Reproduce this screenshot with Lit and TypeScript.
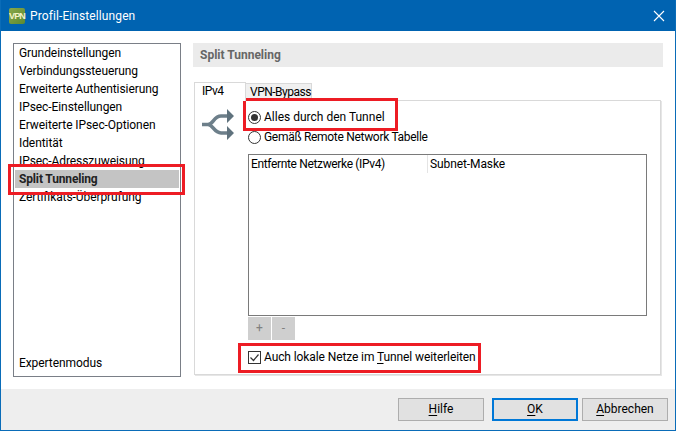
import { LitElement, html, css } from "lit";
import { customElement } from "lit/decorators.js";

const items = ["Grundeinstellungen","Verbindungssteuerung","Erweiterte Authentisierung","IPsec-Einstellungen","Erweiterte IPsec-Optionen","Identität","IPsec-Adresszuweisung","Split Tunneling","Zertifikats-Überprüfung"];

@customElement("app-root")
export class AppRoot extends LitElement {
  static styles = css`
    :host { display: block; width: 676px; height: 431px; }
    * { box-sizing: border-box; }
    .win { position: relative; width: 676px; height: 431px; display: flex; flex-direction: column; background: #fff; border: 1px solid #0a6cb8; border-top: 0; font: 12px Roboto, sans-serif; color: #000; overflow: hidden; }
    .title { height: 31px; background: #0063b1; color: #fff; display: flex; align-items: center; padding: 0 0 0 8px; font-size: 12px; letter-spacing: .1px; gap: 5px; }
    .logo { width: 16px; height: 16px; border-radius: 2px; background: linear-gradient(135deg, #8aa84a, #5c8a30); color: #f4f4c8; font: bold 9px "Liberation Sans", sans-serif; display: flex; align-items: center; justify-content: center; letter-spacing: -0.8px; }
    .title span { flex: 1; }
    .close { margin-right: 10px; display: block; }
    .main { flex: 1; display: flex; padding: 12px; gap: 12px; min-height: 0; }
    .side { width: 168px; border: 1px solid #7a7f87; padding: 0 1px 4px; display: flex; flex-direction: column; letter-spacing: -.08px; }
    .it { height: 18px; line-height: 19px; padding-left: 4px; white-space: nowrap; }
    .it.sel { background: #c4c4c4; font-weight: 700; color: #222; letter-spacing: -.15px; }
    .exp { margin-top: auto; }
    .right { flex: 1; min-width: 0; display: flex; flex-direction: column; }
    .hdr { height: 24px; line-height: 24px; background: #ebebeb; padding-left: 7px; font-weight: 700; color: #666; }
    .tabs { display: flex; margin: 14px 0 0 1px; align-items: flex-end; height: 19px; letter-spacing: -.5px; }
    .tab { border: 1px solid #d9d9d9; height: 19px; width: 52px; padding-left: 7px; line-height: 16px; background: #fff; border-bottom: 0; position: relative; z-index: 1; margin-bottom: -1px; white-space: nowrap; }
    .tab.off { height: 17px; width: 67px; background: #f0f0f0; padding-left: 4px; margin-bottom: 0; margin-left: -1px; z-index: 0; }
    .panel { flex: 1; margin: 0 2px 2px 1px; border: 1px solid #d9d9d9; box-shadow: 1px 1px 0 #e6e6e6; display: flex; }
    .arrows { width: 53px; flex: none; padding: 7px 0 0 5px; }
    .arrows svg { display: block; }
    .pc { flex: 1; min-width: 0; padding: 6px 13px 0 0; display: flex; flex-direction: column; }
    .opt { height: 20px; display: flex; align-items: center; gap: 3px; white-space: nowrap; }
    .opt.tight { letter-spacing: -.3px; }
    .radio, .check { flex: none; display: block; }
    .table { margin-top: 7px; height: 162px; border: 1px solid #7a7a7a; display: flex; flex-direction: column; }
    .th { display: flex; height: 18px; line-height: 18px; }
    .th div:first-child { width: 179px; padding-left: 2px; border-right: 1px solid #e4e4e4; letter-spacing: -.35px; }
    .th div:last-child { padding-left: 2px; letter-spacing: -.1px; }
    .mini { display: flex; gap: 1px; margin-top: 1px; }
    .mini div { width: 23px; height: 23px; background: #cfcfcf; color: #808080; text-align: center; line-height: 22px; }
    .cb { margin-top: 7px; letter-spacing: -.1px; }
    u { text-decoration-thickness: 1px; text-underline-offset: 2px; }
    .foot { height: 41px; flex: none; background: #eee; display: flex; justify-content: flex-end; padding: 9px 7px 0 0; gap: 8px; }
    .btn { width: 86px; height: 23px; background: #e1e1e1; border: 1px solid #adadad; text-align: center; line-height: 21px; }
    .btn.def { border: 2px solid #0078d7; line-height: 19px; margin-right: -4px; }
    .mark { position: absolute; border: 3px solid #ed1c24; pointer-events: none; }
    .m1 { left: 7px; top: 164px; width: 177px; height: 31px; }
    .m2 { left: 242px; top: 98px; width: 155px; height: 33px; }
    .m3 { left: 237px; top: 343px; width: 243px; height: 30px; }
  `;
  render() {
    return html`<div class="win">
      <div class="title"><div class="logo">VPN</div><span>Profil-Einstellungen</span>
        <svg class="close" width="12" height="12" viewBox="0 0 12 12"><path d="M1 1L11 11M11 1L1 11" stroke="#fff" stroke-width="1.1"/></svg></div>
      <div class="main">
        <div class="side">
          ${items.map((t) => html`<div class="it ${t === "Split Tunneling" ? "sel" : ""}">${t}</div>`)}
          <div class="it exp">Expertenmodus</div>
        </div>
        <div class="right">
          <div class="hdr">Split Tunneling</div>
          <div class="tabs"><div class="tab">IPv4</div><div class="tab off">VPN-Bypass</div></div>
          <div class="panel">
            <div class="arrows"><svg width="36" height="33" viewBox="0 0 36 33"><path d="M2 16.5H8C13 16.5 14 8 21 8H28M8 16.5C13 16.5 14 25 21 25H28" fill="none" stroke="#6d7f8a" stroke-width="3.6"/><path d="M27 1L34 8L27 15zM27 18L34 25L27 32z" fill="#5f727d"/></svg></div>
            <div class="pc">
              <label class="opt"><svg class="radio" width="13" height="13" viewBox="0 0 13 13"><circle cx="6.5" cy="6.5" r="6" fill="#fff" stroke="#333"/><circle cx="6.5" cy="6.5" r="3.5" fill="#333"/></svg><span>Alles durch den Tunnel</span></label>
              <label class="opt tight"><svg class="radio" width="13" height="13" viewBox="0 0 13 13"><circle cx="6.5" cy="6.5" r="6" fill="#fff" stroke="#333"/></svg><span>Gemäß Remote Network Tabelle</span></label>
              <div class="table"><div class="th"><div>Entfernte Netzwerke (IPv4)</div><div>Subnet-Maske</div></div></div>
              <div class="mini"><div>+</div><div>-</div></div>
              <label class="opt cb"><svg class="check" width="13" height="13" viewBox="0 0 13 13"><rect x=".5" y=".5" width="12" height="12" fill="#fff" stroke="#333"/><path d="M2.5 6.5l3 3 5-6" fill="none" stroke="#333" stroke-width="1.2"/></svg><span>Auch lokale Netze im <u>T</u>unnel weiterleiten</span></label>
            </div>
          </div>
        </div>
      </div>
      <div class="foot"><div class="btn"><u>H</u>ilfe</div><div class="btn def"><u>O</u>K</div><div class="btn"><u>A</u>bbrechen</div></div>
      <div class="mark m1"></div><div class="mark m2"></div><div class="mark m3"></div>
    </div>`;
  }
}
